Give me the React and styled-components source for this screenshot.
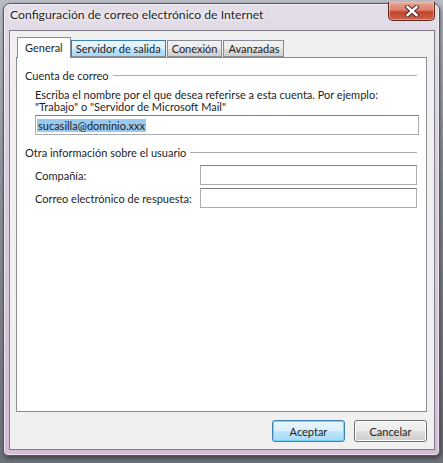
import React from 'react';
import styled, { createGlobalStyle } from 'styled-components';

const Global = createGlobalStyle`
  html, body { margin: 0; padding: 0; }
  body {
    width: 443px;
    height: 463px;
    overflow: hidden;
    background: linear-gradient(180deg, #b9bcc4 0%, #8e929c 40%, #6d7079 100%);
    font-family: Lato, "Noto Sans", sans-serif;
    font-size: 11px;
    white-space: nowrap;
  }
`;

const Desk = styled.div`
  padding: 3px 4px 0 3px;
`;

const Frame = styled.div`
  width: 437px;
  height: 453px;
  box-sizing: border-box;
  border: 1px solid #5b5560;
  border-radius: 7px 7px 5px 5px;
  background: linear-gradient(180deg, #e3dde8 0%, #d9cfe0 30%, #d6c6da 70%, #d5bcd8 100%);
  box-shadow: inset 0 0 0 1px rgba(255, 255, 255, 0.55), 1px 2px 4px rgba(0, 0, 0, 0.45);
  padding: 0 4px 5px 5px;
  display: flex;
  flex-direction: column;
`;

const TitleBar = styled.div`
  height: 26px;
  display: flex;
  align-items: flex-start;
  justify-content: space-between;
`;

const Title = styled.div`
  padding: 3px 0 0 1px;
  font-size: 12.2px;
  color: #1e1e1e;
  text-shadow: 0 0 6px #fff, 0 0 3px #fff;
`;

const CloseBtn = styled.div`
  width: 47px;
  height: 19px;
  margin-top: -2px;
  box-sizing: border-box;
  border: 1px solid #5a2a22;
  border-top: none;
  border-radius: 0 0 5px 5px;
  background: linear-gradient(180deg, #e9a99a 0%, #dc7f6a 45%, #c4452d 55%, #d0604a 100%);
  box-shadow: inset 0 0 0 1px rgba(255, 220, 210, 0.45);
  display: flex;
  align-items: center;
  justify-content: center;
`;

const Client = styled.div`
  flex: 1;
  box-sizing: border-box;
  border: 1px solid #7e7a86;
  background: #f0f0f0;
  padding: 6px 7px 0 6px;
  display: flex;
  flex-direction: column;
`;

const Tabs = styled.div`
  display: flex;
  align-items: flex-end;
  height: 20px;
  padding-left: 1px;
  position: relative;
  z-index: 1;
`;

const Tab = styled.div`
  box-sizing: border-box;
  height: ${p => (p.$active ? '21px' : '17px')};
  margin-right: ${p => p.$gap || 0}px;
  margin-bottom: ${p => (p.$active ? '-1px' : '0')};
  padding: 0 ${p => (p.$active ? 7 : 4)}px;
  border: 1px solid ${p => (p.$hover ? '#3c7fb1' : '#898c95')};
  border-bottom: ${p => (p.$active ? 'none' : `1px solid #898c95`)};
  background: ${p =>
    p.$active
      ? '#ffffff'
      : p.$hover
      ? 'linear-gradient(180deg, #eaf6fd 0%, #d9f0fc 50%, #bee6fd 51%, #a7d9f5 100%)'
      : 'linear-gradient(180deg, #f2f2f2 0%, #ebebeb 50%, #dddddd 51%, #cfcfcf 100%)'};
  color: #1e1e1e;
  line-height: ${p => (p.$active ? '19px' : '15px')};
`;

const Panel = styled.div`
  box-sizing: border-box;
  height: 355px;
  background: #fff;
  border: 1px solid #898c95;
  padding: 9px 9px 0 8px;
`;

const Group = styled.div`
  margin-bottom: ${p => p.$mb || 0}px;
`;

const GroupHead = styled.div`
  display: flex;
  align-items: center;
  gap: 4px;
  height: 16px;
  color: #1e1e1e;
  &::after {
    content: '';
    flex: 1;
    height: 1px;
    background: #a9aeb3;
  }
`;

const GroupBody = styled.div`
  padding: ${p => p.$pt || 0}px 0 0 10px;
`;

const Desc = styled.div`
  line-height: 12px;
  color: #1e1e1e;
`;

const DescBlock = styled.div`
  margin-bottom: 2px;
`;

const Field = styled.div`
  box-sizing: border-box;
  height: 20px;
  width: ${p => p.$w || 384}px;
  border: 1px solid #abadb3;
  border-top-color: #7f8188;
  background: #fff;
  padding: 2px 1px;
  display: flex;
  align-items: center;
`;

const Selected = styled.span`
  background: #99c9ef;
  color: #1e1e1e;
  line-height: 13px;
  padding: 0 1px;
`;

const FormRow = styled.div`
  display: flex;
  align-items: center;
  justify-content: space-between;
  margin-bottom: 3px;
`;

const Label = styled.div`
  color: #1e1e1e;
`;

const Buttons = styled.div`
  display: flex;
  justify-content: flex-end;
  gap: 9px;
  padding-top: 8px;
`;

const Button = styled.div`
  box-sizing: border-box;
  width: 73px;
  height: 22px;
  border: 1px solid ${p => (p.$default ? '#3c7fb1' : '#707070')};
  border-radius: 3px;
  background: ${p =>
    p.$default
      ? 'linear-gradient(180deg, #eaf6fd 0%, #d9f0fc 48%, #bee6fd 52%, #a7d9f5 100%)'
      : 'linear-gradient(180deg, #f2f2f2 0%, #ebebeb 48%, #dddddd 52%, #cfcfcf 100%)'};
  box-shadow: inset 0 0 0 1px ${p => (p.$default ? '#7ad5f5' : '#fcfcfc')};
  color: #1e1e1e;
  display: flex;
  align-items: center;
  justify-content: center;
`;

function CloseX() {
  return (
    <svg width="14" height="12" viewBox="0 0 14 12">
      <path d="M2.5 2 L11.5 10 M11.5 2 L2.5 10" stroke="#4a2a2a" strokeWidth="4.4" strokeLinecap="square" />
      <path d="M2.5 2 L11.5 10 M11.5 2 L2.5 10" stroke="#ffffff" strokeWidth="2.4" strokeLinecap="square" />
    </svg>
  );
}

export default function App() {
  return (
    <Desk>
      <Global />
      <Frame>
        <TitleBar>
          <Title>Configuración de correo electrónico de Internet</Title>
          <CloseBtn>
            <CloseX />
          </CloseBtn>
        </TitleBar>
        <Client>
          <Tabs>
            <Tab $active>General</Tab>
            <Tab $hover $gap={1}>Servidor de salida</Tab>
            <Tab $gap={1}>Conexión</Tab>
            <Tab>Avanzadas</Tab>
          </Tabs>
          <Panel>
            <Group $mb={9}>
              <GroupHead>Cuenta de correo</GroupHead>
              <GroupBody $pt={6}>
                <DescBlock>
                  <Desc>Escriba el nombre por el que desea referirse a esta cuenta. Por ejemplo:</Desc>
                  <Desc>"Trabajo" o "Servidor de Microsoft Mail"</Desc>
                </DescBlock>
                <Field>
                  <Selected>sucasilla@dominio.xxx</Selected>
                </Field>
              </GroupBody>
            </Group>
            <Group>
              <GroupHead>Otra información sobre el usuario</GroupHead>
              <GroupBody $pt={5}>
                <FormRow>
                  <Label>Compañía:</Label>
                  <Field $w={217} />
                </FormRow>
                <FormRow>
                  <Label>Correo electrónico de respuesta:</Label>
                  <Field $w={217} />
                </FormRow>
              </GroupBody>
            </Group>
          </Panel>
          <Buttons>
            <Button $default>Aceptar</Button>
            <Button>Cancelar</Button>
          </Buttons>
        </Client>
      </Frame>
    </Desk>
  );
}
